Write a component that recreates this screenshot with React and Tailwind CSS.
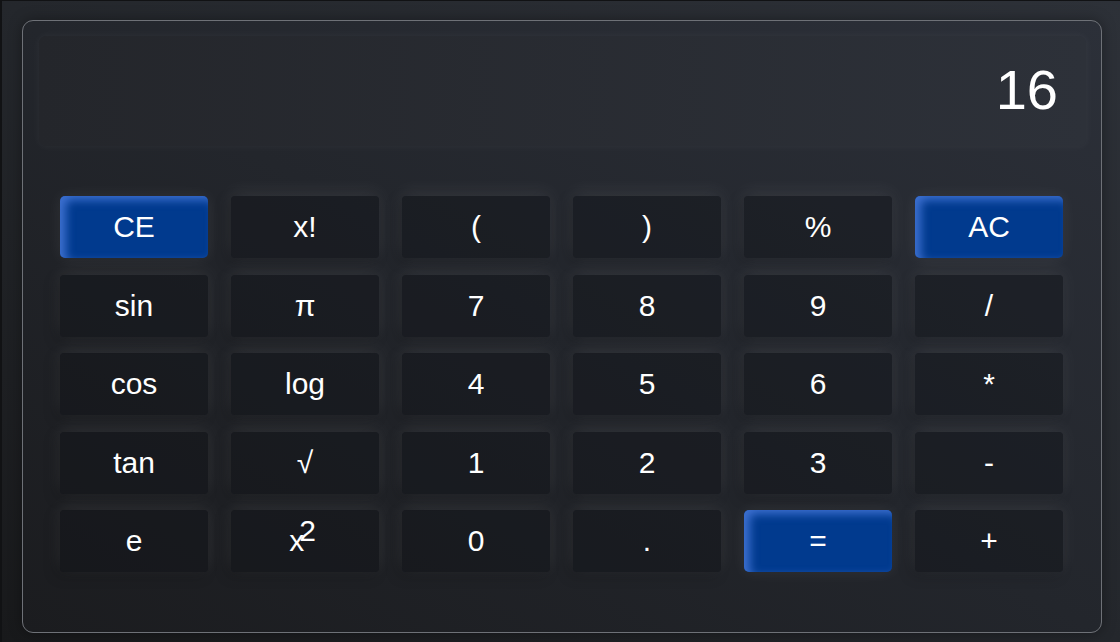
import React from "react";

const keys = [
  ["CE", "x!", "(", ")", "%", "AC"],
  ["sin", "π", "7", "8", "9", "/"],
  ["cos", "log", "4", "5", "6", "*"],
  ["tan", "√", "1", "2", "3", "-"],
  ["e", "x2", "0", ".", "=", "+"],
];

const blueKeys = ["CE", "AC", "="];

const Key = ({ label }) => {
  const isBlue = blueKeys.includes(label);
  return (
    <button
      className={
        isBlue
          ? "h-[62px] rounded-[5px] bg-[#013a8e] text-white text-[30px] leading-none flex items-center justify-center shadow-[inset_6px_4px_10px_rgba(80,130,230,0.75),0_0_16px_rgba(255,255,255,0.07)]"
          : "h-[62px] rounded-[4px] bg-[rgba(14,16,20,0.38)] text-white text-[30px] leading-none flex items-center justify-center shadow-[0_-4px_18px_rgba(255,255,255,0.08),-4px_4px_14px_rgba(0,0,0,0.18)]"
      }
    >
      {label === "x2" ? (
        <span className="relative">
          x<span className="absolute left-[10px] -top-[10px]">2</span>
          <span className="invisible">2</span>
        </span>
      ) : (
        label
      )}
    </button>
  );
};

const App = () => {
  return (
    <main
      className="w-[1120px] h-[642px] bg-gradient-to-tr from-[#18191b] via-[#24272c] to-[#2d3138] border-l-2 border-t border-[#111214] pt-[19px] pl-[20px] font-['Liberation_Sans',Arial,sans-serif]"
    >
      <div className="w-[1080px] h-[613px] rounded-[11px] border border-[#6e7177] bg-gradient-to-tr from-[#1b1c1f] via-[#23262c] to-[#2c3039] pt-[15px] pl-[16px] pr-[15px] shadow-[0_0_14px_rgba(0,0,0,0.35)]">
        <div className="h-[110px] rounded-[7px] bg-gradient-to-r from-[#24262b] to-[#2d3139] shadow-[0_0_10px_rgba(255,255,255,0.05)] flex items-center justify-end pr-[28px] pb-[3px]">
          <span className="text-white text-[56px] leading-none">16</span>
        </div>
        <div className="mt-[50px] ml-[21px] w-[1003px] grid grid-cols-[repeat(6,148px)] gap-x-[23px] gap-y-[16.5px]">
          {keys.flat().map((k, i) => (
            <Key key={i} label={k} />
          ))}
        </div>
      </div>
    </main>
  );
};

export default App;
